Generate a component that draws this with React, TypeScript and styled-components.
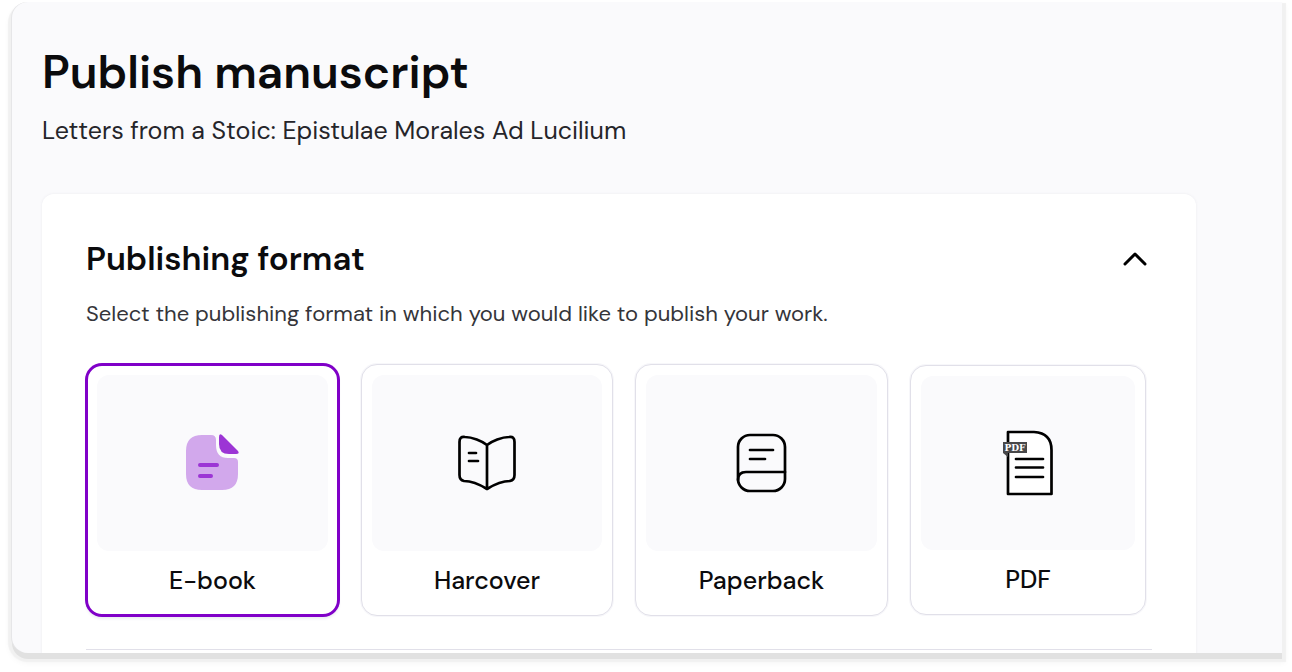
import React, { useState } from "react";
import styled, { createGlobalStyle } from "styled-components";

const GlobalStyle = createGlobalStyle`
  *, *::before, *::after { box-sizing: border-box; }
  body {
    margin: 0;
    background: #ffffff;
    color: #0b0b0d;
    font-family: "DM Sans", Inter, "Liberation Sans", sans-serif;
  }
`;

const Window = styled.main`
  margin: 2px 10px 18px 12px;
  padding: 40px 86px 0 30px;
  background: #fafafc;
  border-radius: 16px 0 0 16px;
  overflow: hidden;
  box-shadow: -1px 0 0 0 #e6e6e8, 0 6px 0 0 #e1e1e1, 0 5px 1px 4px #f1f1f1,
    0 7px 6px 3px #f6f6f6;
`;

const Title = styled.h1`
  margin: 0;
  font-size: 46px;
  line-height: 60px;
  font-weight: 600;
  color: #0b0b0d;
`;

const Subtitle = styled.p`
  margin: 13px 0 0;
  font-size: 25px;
  line-height: 32px;
  color: #25252a;
`;

const Panel = styled.section`
  margin-top: 47px;
  padding: 43px 44px 3px;
  background: #ffffff;
  border-radius: 12px 12px 0 0;
  box-shadow: 0 0 2px 1px #f3f3f6;
`;

const PanelHeader = styled.header`
  display: flex;
  align-items: center;
  justify-content: space-between;
`;

const PanelTitle = styled.h2`
  margin: 0;
  font-size: 33px;
  line-height: 44px;
  font-weight: 600;
`;

const ToggleButton = styled.button`
  display: flex;
  padding: 0;
  border: 0;
  background: none;
  color: #000000;
  cursor: pointer;
`;

const Formats = styled.fieldset`
  min-width: 0;
  margin: 0;
  padding: 0;
  border: 0;
`;

const Hint = styled.legend`
  padding: 17px 0 34px;
  font-size: 22px;
  line-height: 32px;
  color: #35353a;
`;

const Options = styled.div`
  display: grid;
  grid-template-columns: 253fr 252fr 253fr 236fr;
  align-items: center;
  gap: 22px;
  padding-right: 6px;
`;

const Option = styled.label<{ $selected: boolean }>`
  position: relative;
  display: flex;
  flex-direction: column;
  padding: ${(p) => (p.$selected ? "9px 9px 0" : "10px 10px 1px")};
  border: ${(p) => (p.$selected ? "2px solid #8000c8" : "1px solid #e1e0e9")};
  border-radius: 16px;
  background: #ffffff;
  box-shadow: ${(p) => (p.$selected ? "0 0 0 1px #8000c8, 0 3px 3px #ececf2" : "0 0 0 1px #f7f7fa")};
  cursor: pointer;

  &:focus-within {
    border-color: #8000c8;
  }
`;

const Radio = styled.input`
  position: absolute;
  inset: 0;
  margin: 0;
  opacity: 0;
  cursor: pointer;
`;

const Preview = styled.span<{ $compact: boolean }>`
  display: flex;
  align-items: center;
  justify-content: center;
  height: ${(p) => (p.$compact ? 174 : 176)}px;
  border-radius: 12px;
  background: #fafafc;
`;

const OptionName = styled.span`
  padding: 14px 0 17px;
  font-size: 25px;
  line-height: 32px;
  font-weight: 500;
  text-align: center;
  color: #0b0b0d;
`;

const Divider = styled.hr`
  height: 1px;
  margin: 33px 0 0;
  border: 0;
  background: #e1e0e9;
`;

const EbookIcon = () => (
  <svg width="60" height="64" viewBox="1 0 60 64" aria-hidden="true">
    <path
      d="M20 4H29Q34 4 34 9V14Q34 27 46 27H52Q56 27 56 31V43Q56 59 40 59H20Q4 59 4 43V20Q4 4 20 4Z"
      fill="#d2a8ec"
    />
    <path d="M37 6Q37 2 40 4L56 20Q58 23 54 23H47Q37 23 37 13Z" fill="#9c35d5" />
    <path d="M18 34H35M18 45H29" stroke="#9c35d5" strokeWidth="4" strokeLinecap="round" />
  </svg>
);

const HardcoverIcon = () => (
  <svg width="60" height="60" viewBox="0 0 60 60" fill="none" stroke="#000" strokeLinecap="round" strokeLinejoin="round" aria-hidden="true">
    <path
      d="M30 12C25 8 15 4 8 4Q2.500 3 2.500 9V42Q2.500 47 7 48C14 48 22 51 30 56C38 51 46 48 53 48Q57.500 47 57.500 42V9Q57.500 3 52 4C45 4 35 8 30 12ZM30 12V56"
      strokeWidth="2.700"
    />
    <path d="M12 20H19M12 28H21" strokeWidth="2.700" />
  </svg>
);

const PaperbackIcon = () => (
  <svg width="52" height="60" viewBox="0 0 52 60" fill="none" stroke="#000" strokeWidth="2.700" strokeLinecap="round" aria-hidden="true">
    <rect x="2" y="2" width="47" height="56" rx="12" />
    <path d="M2 47Q2 39 10 39H49M14 17H37M14 26H29" />
  </svg>
);

const PdfIcon = () => (
  <svg width="52" height="68" viewBox="0 0 52 68" aria-hidden="true">
    <path
      d="M6 3H32Q49.500 4 49.500 21V65H6Z"
      fill="#fff"
      stroke="#000"
      strokeWidth="2.700"
      strokeLinejoin="round"
    />
    <path d="M14 30H41M14 38.500H41M14 48H41" stroke="#000" strokeWidth="2.700" strokeLinecap="round" />
    <path d="M1 13H25V24H6V28L1 24Z" fill="#48484a" />
    <text x="13" y="22" textAnchor="middle" fontFamily="DejaVu Serif, serif" fontWeight="700" fontSize="9" fill="#fff">
      PDF
    </text>
  </svg>
);

const formats = [
  { id: "ebook", name: "E-book", Icon: EbookIcon, compact: false },
  { id: "hardcover", name: "Harcover", Icon: HardcoverIcon, compact: false },
  { id: "paperback", name: "Paperback", Icon: PaperbackIcon, compact: false },
  { id: "pdf", name: "PDF", Icon: PdfIcon, compact: true },
];

export default function App() {
  const [selected, setSelected] = useState("ebook");
  const [open, setOpen] = useState(true);

  return (
    <>
      <GlobalStyle />
      <Window>
        <Title>Publish manuscript</Title>
        <Subtitle>Letters from a Stoic: Epistulae Morales Ad Lucilium</Subtitle>
        <Panel>
          <PanelHeader>
            <PanelTitle>Publishing format</PanelTitle>
            <ToggleButton
              type="button"
              aria-label="Publishing format"
              aria-expanded={open}
              onClick={() => setOpen(!open)}
            >
              <svg width="34" height="32" viewBox="0 0 34 32" fill="none" stroke="currentColor" strokeWidth="3" strokeLinecap="round" strokeLinejoin="round" aria-hidden="true">
                <path d={open ? "M7 21L17 11L27 21" : "M7 11L17 21L27 11"} />
              </svg>
            </ToggleButton>
          </PanelHeader>
          {open && (
            <Formats>
              <Hint>Select the publishing format in which you would like to publish your work.</Hint>
              <Options>
                {formats.map(({ id, name, Icon, compact }) => (
                  <Option key={id} $selected={selected === id}>
                    <Radio
                      type="radio"
                      name="format"
                      value={id}
                      checked={selected === id}
                      onChange={() => setSelected(id)}
                    />
                    <Preview $compact={compact}>
                      <Icon />
                    </Preview>
                    <OptionName>{name}</OptionName>
                  </Option>
                ))}
              </Options>
            </Formats>
          )}
          <Divider />
        </Panel>
      </Window>
    </>
  );
}
